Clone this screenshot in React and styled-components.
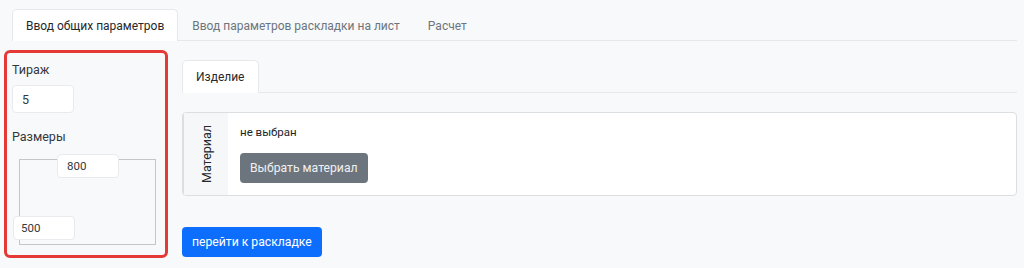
import React from "react";
import styled, { createGlobalStyle } from "styled-components";

const GlobalStyle = createGlobalStyle`
  html, body {
    margin: 0;
    padding: 0;
    background: #f8f9fa;
    font-family: Roboto, "Liberation Sans", sans-serif;
    color: #212529;
  }
  * {
    box-sizing: border-box;
  }
`;

const Page = styled.div`
  width: 1024px;
  height: 268px;
  padding: 9px 7px 0 4px;
  overflow: hidden;
`;

const TabBar = styled.nav`
  display: flex;
  margin-left: ${props => props.indent || 0}px;
  border-bottom: 1px solid #e6e8eb;
  height: ${props => props.height}px;
`;

const Tab = styled.div`
  padding: 0 13px;
  display: flex;
  align-items: center;
  font-size: 12px;
  white-space: nowrap;
  color: ${props => (props.active ? "#25292d" : "#6c757d")};
  background: ${props => (props.active ? "#fff" : "transparent")};
  border: 1px solid ${props => (props.active ? "#e6e8eb" : "transparent")};
  border-bottom: none;
  border-radius: 5px 5px 0 0;
  margin-bottom: -1px;
`;

const Body = styled.div`
  display: flex;
  align-items: flex-start;
  margin-top: 9px;
`;

const Sidebar = styled.aside`
  width: 164px;
  height: 208px;
  border: 3px solid #e53935;
  border-radius: 6px;
  padding: 7px 5px 0 5px;
  display: flex;
  flex-direction: column;
`;

const FieldLabel = styled.div`
  font-size: 12.5px;
  line-height: 20px;
  color: #33383d;
  margin-top: ${props => props.gap || 0}px;
`;

const SmallInput = styled.div`
  width: 62px;
  height: ${props => props.height || 28}px;
  margin-top: ${props => props.gap || 0}px;
  background: #fff;
  border: 1px solid #e8eaed;
  border-radius: 4px;
  font-size: ${props => props.size || 12.5}px;
  color: #33383d;
  display: flex;
  align-items: center;
  padding-left: ${props => props.pad || 9}px;
`;

const Diagram = styled.div`
  position: relative;
  height: 92px;
  margin-top: 7px;
`;

const SheetRect = styled.div`
  position: absolute;
  left: 7px;
  top: 5px;
  width: 137px;
  height: 86px;
  border: 1px solid #c4c7ca;
`;

const SizeInput = styled(SmallInput)`
  position: absolute;
  left: ${props => props.x}px;
  top: ${props => props.y}px;
`;

const Main = styled.section`
  flex: 1;
  margin-left: 14px;
  margin-top: 10px;
  display: flex;
  flex-direction: column;
`;

const Card = styled.div`
  display: flex;
  height: 84px;
  margin-top: 19px;
  background: #fff;
  border: 1px solid #dcdfe2;
  border-radius: 4px;
  overflow: hidden;
`;

const SideLabel = styled.div`
  width: 45px;
  background: #f6f7f8;
  border-right: 1px solid #dcdfe2;
  display: flex;
  align-items: center;
  justify-content: center;
  writing-mode: vertical-rl;
  transform: rotate(180deg);
  font-size: 12.5px;
  color: #25292d;
`;

const CardBody = styled.div`
  padding: 11px 12px 0;
  display: flex;
  flex-direction: column;
  align-items: flex-start;
`;

const Note = styled.div`
  font-size: 11.5px;
  line-height: 16px;
  color: #212529;
`;

const Button = styled.button`
  font-family: inherit;
  font-size: 12.2px;
  height: 30px;
  padding: 0 10px;
  border: none;
  border-radius: 4px;
  background: ${props => (props.variant === "primary" ? "#0d6efd" : "#6c757d")};
  color: ${props => (props.variant === "primary" ? "#fff" : "#eef0f2")};
  margin-top: ${props => props.gap || 0}px;
  align-self: flex-start;
`;

const App = () => {
  return (
    <Page>
      <GlobalStyle />
      <TabBar indent={8} height={32}>
        <Tab active>Ввод общих параметров</Tab>
        <Tab>Ввод параметров раскладки на лист</Tab>
        <Tab>Расчет</Tab>
      </TabBar>
      <Body>
        <Sidebar>
          <FieldLabel>Тираж</FieldLabel>
          <SmallInput gap={5}>5</SmallInput>
          <FieldLabel gap={14}>Размеры</FieldLabel>
          <Diagram>
            <SheetRect />
            <SizeInput x={45} y={0} height={24} size={11.5}>
              800
            </SizeInput>
            <SizeInput x={1} y={62} height={24} size={11.5} pad={7}>
              500
            </SizeInput>
          </Diagram>
        </Sidebar>
        <Main>
          <TabBar height={33}>
            <Tab active>Изделие</Tab>
          </TabBar>
          <Card>
            <SideLabel>Материал</SideLabel>
            <CardBody>
              <Note>не выбран</Note>
              <Button gap={13}>Выбрать материал</Button>
            </CardBody>
          </Card>
          <Button variant="primary" gap={31}>
            перейти к раскладке
          </Button>
        </Main>
      </Body>
    </Page>
  );
};

export default App;
